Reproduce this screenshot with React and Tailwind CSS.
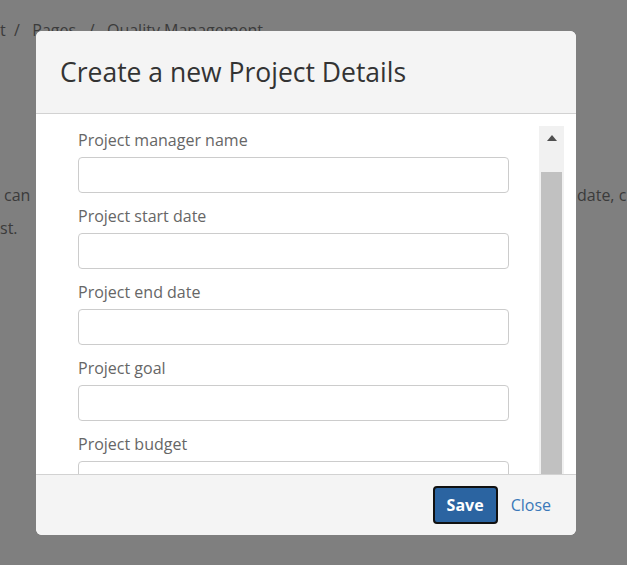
import React from "react";

const fields = [
  "Project manager name",
  "Project start date",
  "Project end date",
  "Project goal",
  "Project budget",
];

export default function App() {
  return (
    <div
      className="relative w-[627px] h-[565px] overflow-hidden bg-[#7f7f7f] text-[#3b3b3b]"
      style={{ fontFamily: '"Open Sans", "Noto Sans", sans-serif' }}
    >
      {/* background page text */}
      <div className="absolute left-0 top-[20px] text-[16px] leading-[20px] whitespace-nowrap">
        t&nbsp;&nbsp;/&nbsp;&nbsp;&nbsp;Pages&nbsp;&nbsp;&nbsp;/&nbsp;&nbsp;&nbsp;Quality Management
      </div>
      <div className="absolute left-[4px] top-[179px] text-[16px] leading-[33px]">
        can
      </div>
      <div className="absolute left-[0px] top-[212px] text-[16px] leading-[33px]">
        st.
      </div>
      <div className="absolute left-[577px] top-[179px] text-[16px] leading-[33px] whitespace-nowrap">
        date, c
      </div>

      {/* modal */}
      <div className="absolute left-[36px] top-[31px] w-[540px] h-[504px] rounded-[6px] overflow-hidden bg-white flex flex-col">
        <div className="h-[83px] shrink-0 bg-[#f4f4f4] border-b border-[#d2d2d2] flex items-center pl-[24px]">
          <h2 className="text-[26.5px] leading-[32px] text-[#333] font-normal">
            Create a new Project Details
          </h2>
        </div>
        <div className="flex-1 flex pt-[12px] pr-[12px] min-h-0">
          <div className="flex-1 overflow-hidden pl-[42px] pr-[30px] pt-[4px]">
            {fields.map((f) => (
              <div key={f} className="mb-[13px]">
                <label className="block text-[16px] leading-[20px] text-[#666] mb-[7px]">
                  {f}
                </label>
                <div className="h-[36px] border border-[#cccccc] rounded-[4px] bg-white" />
              </div>
            ))}
          </div>
          <div className="w-[25px] shrink-0 bg-[#f1f1f1] flex flex-col items-center">
            <div className="h-[46px] w-full flex justify-center pt-[8px]">
              <div className="w-0 h-0 border-l-[5px] border-r-[5px] border-b-[6px] border-l-transparent border-r-transparent border-b-[#505050] mt-[1px]" />
            </div>
            <div className="flex-1 w-[21px] bg-[#c1c1c1]" />
          </div>
        </div>
        <div className="h-[61px] shrink-0 bg-[#f4f4f4] border-t border-[#d2d2d2] flex items-center justify-end pr-[25px] gap-[13px]">
          <button className="h-[38px] px-[12px] rounded-[4px] bg-[#2b64a1] border-2 border-[#111] text-white font-bold text-[16px]">
            Save
          </button>
          <span className="text-[16px] text-[#3a78b9]">Close</span>
        </div>
      </div>
    </div>
  );
}
